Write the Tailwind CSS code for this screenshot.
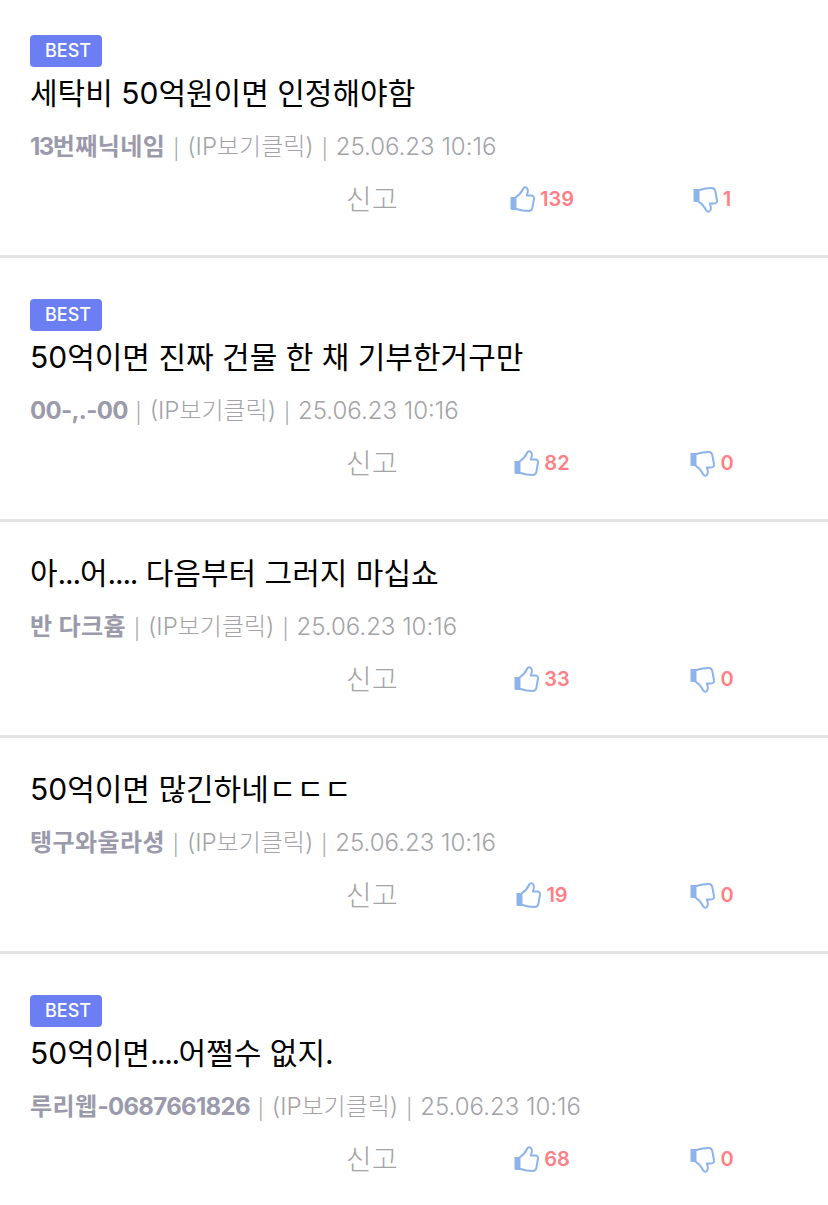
<!doctype html>
<html lang="ko"><head><meta charset="utf-8"><script src="https://cdn.jsdelivr.net/npm/@tailwindcss/browser@4"></script></head>
<body class="bg-white overflow-hidden font-['Inter','Noto_Sans_CJK_KR',sans-serif]">
<main class="h-[1205px] overflow-hidden">
<article class="h-[258px] pt-[35px] border-b-[3px] border-[#e2e2e2] px-[30px]">
  <span class="block w-[72px] h-[32px] pl-[4px] rounded-[4px] bg-[#6b7ff2] text-white text-[18px] leading-[31px] text-center font-medium">BEST</span>
  <h2 class="mt-[6px] text-[30px] leading-[40px] text-black font-normal">세탁비 50억원이면 인정해야함</h2>
  <p class="mt-[13px] h-[40px] text-[24px] leading-[40px] text-[#a3a3a8] font-light whitespace-nowrap"><b class="font-bold text-[#9a9aaa] tracking-[0.4px]"><span class="tracking-[-1.5px]">13</span>번째닉네임</b><span class="inline-block w-[22px] text-center font-['Noto_Sans']">|</span>(IP보기클릭)<span class="inline-block w-[22px] text-center font-['Noto_Sans']">|</span>25.06.23 10:16</p>
  <div class="mt-[13px] grid grid-cols-[170px_170px_170px] justify-end mr-[1px] h-[40px] items-center text-center">
    <span class="mt-[2px] text-[28px] tracking-[0.5px] font-light text-[#a3a3a3] leading-[38px]">신고</span>
    <span class="flex items-center justify-center gap-[5px] text-[20px] leading-[28px] font-semibold text-[#ff7f86]"><svg width="25" height="27" viewBox="0 0 25 27" fill="none"><path d="M0.500 11h6v13h-4.500a1.500 1.500 0 0 1-1.500-1.500z" fill="#8db4ea"/><path d="M6 11c3-2 5.500-4.500 7-8 .6-2 3.500-2.500 4.500 0 .8 2 .3 4-.7 6.500h4.500c2 0 3 1.500 2.700 3.500l-1.700 9c-.4 2-1.800 3-3.800 3-4 0-7.500-.5-12-2" stroke="#8db4ea" stroke-width="2" stroke-linejoin="round" stroke-linecap="round"/></svg>139</span>
    <span class="flex items-center justify-center gap-[5px] text-[20px] leading-[28px] font-semibold text-[#ff7f86]"><svg width="25" height="27" viewBox="0 0 25 27" fill="none"><path d="M0.500 3h6v13h-4.500a1.500 1.500 0 0 1-1.500-1.500z" fill="#8db4ea"/><path d="M6 16c3 2 5.500 4.500 7 8 .6 2 3.500 2.500 4.500 0 .8-2 .3-4-.7-6.500h4.500c2 0 3-1.500 2.700-3.500l-1.700-9c-.4-2-1.800-3-3.800-3-4 0-7.500.5-12 2" stroke="#8db4ea" stroke-width="2" stroke-linejoin="round" stroke-linecap="round"/></svg>1</span>
  </div>
</article>
<article class="h-[264px] pt-[41px] border-b-[3px] border-[#e2e2e2] px-[30px]">
  <span class="block w-[72px] h-[32px] pl-[4px] rounded-[4px] bg-[#6b7ff2] text-white text-[18px] leading-[31px] text-center font-medium">BEST</span>
  <h2 class="mt-[6px] text-[30px] leading-[40px] text-black font-normal">50억이면 진짜 건물 한 채 기부한거구만</h2>
  <p class="mt-[13px] h-[40px] text-[24px] leading-[40px] text-[#a3a3a8] font-light whitespace-nowrap"><b class="font-bold text-[#9a9aaa] tracking-[-0.7px]">00-,.-00</b><span class="inline-block w-[22px] text-center font-['Noto_Sans']">|</span>(IP보기클릭)<span class="inline-block w-[22px] text-center font-['Noto_Sans']">|</span>25.06.23 10:16</p>
  <div class="mt-[13px] grid grid-cols-[170px_170px_170px] justify-end mr-[1px] h-[40px] items-center text-center">
    <span class="mt-[2px] text-[28px] tracking-[0.5px] font-light text-[#a3a3a3] leading-[38px]">신고</span>
    <span class="flex items-center justify-center gap-[5px] text-[20px] leading-[28px] font-semibold text-[#ff7f86]"><svg width="25" height="27" viewBox="0 0 25 27" fill="none"><path d="M0.500 11h6v13h-4.500a1.500 1.500 0 0 1-1.500-1.500z" fill="#8db4ea"/><path d="M6 11c3-2 5.500-4.500 7-8 .6-2 3.500-2.500 4.500 0 .8 2 .3 4-.7 6.500h4.500c2 0 3 1.500 2.700 3.500l-1.700 9c-.4 2-1.800 3-3.800 3-4 0-7.500-.5-12-2" stroke="#8db4ea" stroke-width="2" stroke-linejoin="round" stroke-linecap="round"/></svg>82</span>
    <span class="flex items-center justify-center gap-[5px] text-[20px] leading-[28px] font-semibold text-[#ff7f86]"><svg width="25" height="27" viewBox="0 0 25 27" fill="none"><path d="M0.500 3h6v13h-4.500a1.500 1.500 0 0 1-1.500-1.500z" fill="#8db4ea"/><path d="M6 16c3 2 5.500 4.500 7 8 .6 2 3.500 2.500 4.500 0 .8-2 .3-4-.7-6.500h4.500c2 0 3-1.500 2.700-3.500l-1.700-9c-.4-2-1.800-3-3.800-3-4 0-7.500.5-12 2" stroke="#8db4ea" stroke-width="2" stroke-linejoin="round" stroke-linecap="round"/></svg>0</span>
  </div>
</article>
<article class="h-[216px] pt-[31px] border-b-[3px] border-[#e2e2e2] px-[30px]">
  <h2 class="text-[30px] leading-[40px] text-black font-normal">아<span class="tracking-[-1.2px]">...</span>어<span class="tracking-[-1.2px]">....</span> 다음부터 그러지 마십쇼</h2>
  <p class="mt-[13px] h-[40px] text-[24px] leading-[40px] text-[#a3a3a8] font-light whitespace-nowrap"><b class="font-bold text-[#9a9aaa] tracking-[0.4px]">반 다크흄</b><span class="inline-block w-[22px] text-center font-['Noto_Sans']">|</span>(IP보기클릭)<span class="inline-block w-[22px] text-center font-['Noto_Sans']">|</span>25.06.23 10:16</p>
  <div class="mt-[13px] grid grid-cols-[170px_170px_170px] justify-end mr-[1px] h-[40px] items-center text-center">
    <span class="mt-[2px] text-[28px] tracking-[0.5px] font-light text-[#a3a3a3] leading-[38px]">신고</span>
    <span class="flex items-center justify-center gap-[5px] text-[20px] leading-[28px] font-semibold text-[#ff7f86]"><svg width="25" height="27" viewBox="0 0 25 27" fill="none"><path d="M0.500 11h6v13h-4.500a1.500 1.500 0 0 1-1.500-1.500z" fill="#8db4ea"/><path d="M6 11c3-2 5.500-4.500 7-8 .6-2 3.500-2.500 4.500 0 .8 2 .3 4-.7 6.500h4.500c2 0 3 1.500 2.700 3.500l-1.700 9c-.4 2-1.800 3-3.800 3-4 0-7.500-.5-12-2" stroke="#8db4ea" stroke-width="2" stroke-linejoin="round" stroke-linecap="round"/></svg>33</span>
    <span class="flex items-center justify-center gap-[5px] text-[20px] leading-[28px] font-semibold text-[#ff7f86]"><svg width="25" height="27" viewBox="0 0 25 27" fill="none"><path d="M0.500 3h6v13h-4.500a1.500 1.500 0 0 1-1.500-1.500z" fill="#8db4ea"/><path d="M6 16c3 2 5.500 4.500 7 8 .6 2 3.500 2.500 4.500 0 .8-2 .3-4-.7-6.500h4.500c2 0 3-1.500 2.700-3.500l-1.700-9c-.4-2-1.800-3-3.800-3-4 0-7.500.5-12 2" stroke="#8db4ea" stroke-width="2" stroke-linejoin="round" stroke-linecap="round"/></svg>0</span>
  </div>
</article>
<article class="h-[216px] pt-[31px] border-b-[3px] border-[#e2e2e2] px-[30px]">
  <h2 class="text-[30px] leading-[40px] text-black font-normal">50억이면 많긴하네ㄷㄷㄷ</h2>
  <p class="mt-[13px] h-[40px] text-[24px] leading-[40px] text-[#a3a3a8] font-light whitespace-nowrap"><b class="font-bold text-[#9a9aaa] tracking-[0.4px]">탱구와울라셩</b><span class="inline-block w-[22px] text-center font-['Noto_Sans']">|</span>(IP보기클릭)<span class="inline-block w-[22px] text-center font-['Noto_Sans']">|</span>25.06.23 10:16</p>
  <div class="mt-[13px] grid grid-cols-[170px_170px_170px] justify-end mr-[1px] h-[40px] items-center text-center">
    <span class="mt-[2px] text-[28px] tracking-[0.5px] font-light text-[#a3a3a3] leading-[38px]">신고</span>
    <span class="flex items-center justify-center gap-[5px] text-[20px] leading-[28px] font-semibold text-[#ff7f86]"><svg width="25" height="27" viewBox="0 0 25 27" fill="none"><path d="M0.500 11h6v13h-4.500a1.500 1.500 0 0 1-1.500-1.500z" fill="#8db4ea"/><path d="M6 11c3-2 5.500-4.500 7-8 .6-2 3.500-2.500 4.500 0 .8 2 .3 4-.7 6.500h4.500c2 0 3 1.500 2.700 3.500l-1.700 9c-.4 2-1.800 3-3.800 3-4 0-7.500-.5-12-2" stroke="#8db4ea" stroke-width="2" stroke-linejoin="round" stroke-linecap="round"/></svg>19</span>
    <span class="flex items-center justify-center gap-[5px] text-[20px] leading-[28px] font-semibold text-[#ff7f86]"><svg width="25" height="27" viewBox="0 0 25 27" fill="none"><path d="M0.500 3h6v13h-4.500a1.500 1.500 0 0 1-1.500-1.500z" fill="#8db4ea"/><path d="M6 16c3 2 5.500 4.500 7 8 .6 2 3.500 2.500 4.500 0 .8-2 .3-4-.7-6.500h4.500c2 0 3-1.500 2.700-3.500l-1.700-9c-.4-2-1.800-3-3.800-3-4 0-7.500.5-12 2" stroke="#8db4ea" stroke-width="2" stroke-linejoin="round" stroke-linecap="round"/></svg>0</span>
  </div>
</article>
<article class="pt-[41px] px-[30px]">
  <span class="block w-[72px] h-[32px] pl-[4px] rounded-[4px] bg-[#6b7ff2] text-white text-[18px] leading-[31px] text-center font-medium">BEST</span>
  <h2 class="mt-[6px] text-[30px] leading-[40px] text-black font-normal">50억이면<span class="tracking-[-1.5px]">....</span>어쩔수 없지.</h2>
  <p class="mt-[13px] h-[40px] text-[24px] leading-[40px] text-[#a3a3a8] font-light whitespace-nowrap"><b class="font-bold text-[#9a9aaa] tracking-[0.4px]">루리웹<span class="tracking-[-0.7px]">-0687661826</span></b><span class="inline-block w-[22px] text-center font-['Noto_Sans']">|</span>(IP보기클릭)<span class="inline-block w-[22px] text-center font-['Noto_Sans']">|</span>25.06.23 10:16</p>
  <div class="mt-[13px] grid grid-cols-[170px_170px_170px] justify-end mr-[1px] h-[40px] items-center text-center">
    <span class="mt-[2px] text-[28px] tracking-[0.5px] font-light text-[#a3a3a3] leading-[38px]">신고</span>
    <span class="flex items-center justify-center gap-[5px] text-[20px] leading-[28px] font-semibold text-[#ff7f86]"><svg width="25" height="27" viewBox="0 0 25 27" fill="none"><path d="M0.500 11h6v13h-4.500a1.500 1.500 0 0 1-1.500-1.500z" fill="#8db4ea"/><path d="M6 11c3-2 5.500-4.500 7-8 .6-2 3.500-2.500 4.500 0 .8 2 .3 4-.7 6.500h4.500c2 0 3 1.500 2.700 3.500l-1.700 9c-.4 2-1.800 3-3.800 3-4 0-7.500-.5-12-2" stroke="#8db4ea" stroke-width="2" stroke-linejoin="round" stroke-linecap="round"/></svg>68</span>
    <span class="flex items-center justify-center gap-[5px] text-[20px] leading-[28px] font-semibold text-[#ff7f86]"><svg width="25" height="27" viewBox="0 0 25 27" fill="none"><path d="M0.500 3h6v13h-4.500a1.500 1.500 0 0 1-1.500-1.500z" fill="#8db4ea"/><path d="M6 16c3 2 5.500 4.500 7 8 .6 2 3.500 2.500 4.500 0 .8-2 .3-4-.7-6.500h4.500c2 0 3-1.500 2.700-3.500l-1.700-9c-.4-2-1.800-3-3.800-3-4 0-7.500.5-12 2" stroke="#8db4ea" stroke-width="2" stroke-linejoin="round" stroke-linecap="round"/></svg>0</span>
  </div>
</article>
</main>
</body></html>
